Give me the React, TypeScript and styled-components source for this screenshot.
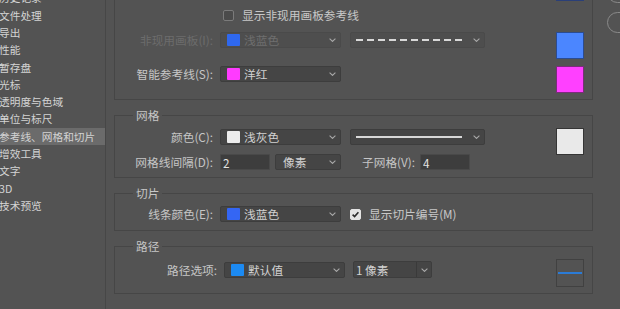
import React from "react";
import styled, { createGlobalStyle } from "styled-components";

const GlobalStyle = createGlobalStyle`
  html, body {
    margin: 0;
    padding: 0;
    background: #535353;
  }
  body {
    font-family: "Noto Sans CJK SC", "Noto Sans", sans-serif;
  }
`;

const NAV_ITEMS = [
  "历史记录",
  "文件处理",
  "导出",
  "性能",
  "暂存盘",
  "光标",
  "透明度与色域",
  "单位与标尺",
  "参考线、网格和切片",
  "增效工具",
  "文字",
  "3D",
  "技术预览",
];
const ACTIVE_ITEM = "参考线、网格和切片";

const Chevron = () => (
  <ChevronIcon width="7" height="4" viewBox="0 0 7 4">
    <path d="M0.6 0.6 L3.5 3.4 L6.4 0.6" fill="none" stroke="#a9a9a9" strokeWidth="1.1" />
  </ChevronIcon>
);

const LinePreview = ({ dashed }: { dashed?: boolean }) => (
  <LineSample width="106" height="2" viewBox="0 0 106 2">
    <line
      x1="0"
      y1="1"
      x2="106"
      y2="1"
      stroke="#d8d8d8"
      strokeWidth="2"
      strokeDasharray={dashed ? "7 4" : undefined}
    />
  </LineSample>
);

const Check = ({ checked }: { checked?: boolean }) => (
  <CheckBox $checked={checked}>
    {checked && (
      <svg width="9" height="9" viewBox="0 0 9 9">
        <path d="M1.6 4.6 L3.6 6.6 L7.4 2.2" fill="none" stroke="#2c2c2c" strokeWidth="1.6" />
      </svg>
    )}
  </CheckBox>
);

const ColorSelect = ({
  color,
  name,
  width = 121,
  disabled,
}: {
  color: string;
  name: string;
  width?: number;
  disabled?: boolean;
}) => (
  <Select $width={width} $disabled={disabled}>
    <Chip $color={color} />
    <span>{name}</span>
    <Chevron />
  </Select>
);

const App = () => {
  return (
    <>
      <GlobalStyle />
      <Window>
        <Sidebar>
          <NavList>
            {NAV_ITEMS.map((item) => (
              <NavItem key={item} $active={item === ACTIVE_ITEM}>
                {item}
              </NavItem>
            ))}
          </NavList>
        </Sidebar>

        <Main>
          <Scroll>
            {/* guides section, scrolled so its header sits above the view */}
            <Section $pb={6}>
              <Body>
                <Rows>
                  <CheckRow $top={33}>
                    <CheckLabel>
                      <Check />
                      <span>显示非现用画板参考线</span>
                    </CheckLabel>
                  </CheckRow>
                  <Row $top={9}>
                    <Label $dim>非现用画板(I):</Label>
                    <Controls>
                      <ColorSelect color="#2f68ee" name="浅蓝色" disabled />
                      <Select $width={135} $disabled>
                        <LinePreview dashed />
                        <Chevron />
                      </Select>
                    </Controls>
                  </Row>
                  <Row $top={18}>
                    <Label>智能参考线(S):</Label>
                    <Controls>
                      <ColorSelect color="#ff3bff" name="洋红" />
                    </Controls>
                  </Row>
                </Rows>
                <Aside>
                  <Swatch $color="#3a62c4" $edge="#2a3f78" />
                  <Swatch $color="#4b86ff" $edge="#2b4c92" $top={31} />
                  <Swatch $color="#ff40ff" $edge="#7c2c7c" $top={7} />
                </Aside>
              </Body>
            </Section>

            <Section $pb={7}>
              <Legend>网格</Legend>
              <Body>
                <Rows>
                  <Row $top={7}>
                    <Label>颜色(C):</Label>
                    <Controls>
                      <ColorSelect color="#ececec" name="浅灰色" />
                      <Select $width={135}>
                        <LinePreview />
                        <Chevron />
                      </Select>
                    </Controls>
                  </Row>
                  <Row $top={9}>
                    <Label>网格线间隔(D):</Label>
                    <Controls $gap={5}>
                      <Input $width={50} defaultValue="2" readOnly />
                      <Select $width={66} $pad={7}>
                        <span>像素</span>
                        <Chevron />
                      </Select>
                      <SubLabel>子网格(V):</SubLabel>
                      <Input $width={50} defaultValue="4" readOnly />
                    </Controls>
                  </Row>
                </Rows>
                <Aside>
                  <Swatch $color="#e9e9e9" $edge="#353535" $top={6} />
                </Aside>
              </Body>
            </Section>

            <Section $pb={8}>
              <Legend>切片</Legend>
              <Body>
                <Rows>
                  <Row $top={6}>
                    <Label>线条颜色(E):</Label>
                    <Controls>
                      <ColorSelect color="#3466f4" name="浅蓝色" />
                      <CheckLabel>
                        <Check checked />
                        <span>显示切片编号(M)</span>
                      </CheckLabel>
                    </Controls>
                  </Row>
                </Rows>
              </Body>
            </Section>

            <Section $pb={6}>
              <Legend>路径</Legend>
              <Body>
                <Rows>
                  <Row $top={8} $h={17}>
                    <Label $width={102}>路径选项:</Label>
                    <Controls $gap={8}>
                      <ColorSelect color="#1c8af2" name="默认值" />
                      <Combo>
                        <ComboText>1 像素</ComboText>
                        <ComboButton>
                          <Chevron />
                        </ComboButton>
                      </Combo>
                    </Controls>
                  </Row>
                </Rows>
                <Aside>
                  <PathPreview $top={6}>
                    <PathLine />
                  </PathPreview>
                </Aside>
              </Body>
            </Section>
          </Scroll>
        </Main>

        <Actions>
          <Pill />
          <Pill />
        </Actions>
      </Window>
    </>
  );
};

const Window = styled.div`
  display: flex;
  width: 620px;
  height: 309px;
  overflow: hidden;
  background: #535353;
  color: #c7c7c7;
`;

const Sidebar = styled.nav`
  flex: 0 0 105px;
  overflow: hidden;
  border-right: 1px solid #474747;
`;

const NavList = styled.ul`
  margin: -10.65px 0 0;
  padding: 0;
  list-style: none;
`;

const NavItem = styled.li<{ $active?: boolean }>`
  height: 17.3px;
  line-height: 17.3px;
  font-size: 10.7px;
  text-indent: -1px;
  white-space: nowrap;
  color: #d3d3d3;
  background: ${(props) => (props.$active ? "#6b6b6b" : "transparent")};
`;

const Main = styled.main`
  flex: 0 0 479px;
  padding-left: 8px;
  overflow: hidden;
`;

const Scroll = styled.div`
  display: flex;
  flex-direction: column;
  gap: 8px;
  margin-top: -27px;
`;

const Section = styled.fieldset<{ $pb: number }>`
  margin: 0;
  min-width: 0;
  padding: 0 8px ${(props) => props.$pb}px 0;
  border: 1px solid #464646;
`;

const Legend = styled.legend`
  margin-left: 18px;
  padding: 0 3px;
  font-size: 11.7px;
  line-height: 14px;
  color: #c6c6c6;
`;

const Body = styled.div`
  display: flex;
  align-items: flex-start;
  justify-content: space-between;
`;

const Rows = styled.div`
  display: flex;
  flex-direction: column;
`;

const Aside = styled.div`
  display: flex;
  flex-direction: column;
  width: 28px;
`;

const Row = styled.div<{ $top?: number; $h?: number }>`
  display: flex;
  align-items: center;
  height: ${(props) => props.$h ?? 16}px;
  margin-top: ${(props) => props.$top ?? 0}px;
`;

const CheckRow = styled(Row)`
  padding-left: 108px;
`;

const Label = styled.label<{ $width?: number; $dim?: boolean }>`
  flex: 0 0 ${(props) => props.$width ?? 98}px;
  margin-right: 7px;
  text-align: right;
  font-size: 11.7px;
  line-height: 16px;
  white-space: nowrap;
  color: ${(props) => (props.$dim ? "#6c6c6c" : "#c6c6c6")};
`;

const SubLabel = styled.label`
  margin-left: 16px;
  font-size: 11.7px;
  line-height: 16px;
  white-space: nowrap;
  color: #c6c6c6;
`;

const Controls = styled.div<{ $gap?: number }>`
  display: flex;
  align-items: center;
  gap: ${(props) => props.$gap ?? 9}px;
`;

const Select = styled.div<{ $width: number; $disabled?: boolean; $pad?: number }>`
  box-sizing: border-box;
  display: flex;
  align-items: center;
  gap: 4px;
  width: ${(props) => props.$width}px;
  height: 16px;
  padding: 0 4px 0 ${(props) => props.$pad ?? 6}px;
  border: 1px solid ${(props) => (props.$disabled ? "#4a4a4a" : "#3d3d3d")};
  border-radius: 2px;
  background: ${(props) => (props.$disabled ? "#4e4e4e" : "#454545")};
  color: ${(props) => (props.$disabled ? "#6e6e6e" : "#d2d2d2")};
  font-size: 11.7px;
  line-height: 14px;
  white-space: nowrap;

  svg:first-child {
    margin-left: -1px;
  }
`;

const Chip = styled.span<{ $color: string }>`
  flex: 0 0 13px;
  height: 12px;
  border-radius: 1px;
  background: ${(props) => props.$color};
`;

const ChevronIcon = styled.svg`
  flex-shrink: 0;
  margin-left: auto;
`;

const LineSample = styled.svg`
  flex-shrink: 0;
`;

const Input = styled.input<{ $width: number }>`
  box-sizing: border-box;
  width: ${(props) => props.$width}px;
  height: 16px;
  margin: 0;
  padding: 0 2px;
  border: 1px solid #494949;
  border-radius: 1px;
  background: #3d3d3d;
  color: #e2e2e2;
  font-family: inherit;
  font-size: 11.7px;
  line-height: 14px;
  outline: none;
`;

const Combo = styled.div`
  box-sizing: border-box;
  display: flex;
  width: 79px;
  height: 17px;
  border: 1px solid #3d3d3d;
  border-radius: 2px;
  background: #454545;
`;

const ComboText = styled.span`
  flex: 1;
  padding-left: 2px;
  font-size: 11.7px;
  line-height: 15px;
  color: #d2d2d2;
  white-space: nowrap;
`;

const ComboButton = styled.span`
  display: flex;
  align-items: center;
  justify-content: center;
  width: 14px;
  border-left: 1px solid #3a3a3a;

  svg {
    margin-left: 0;
  }
`;

const CheckLabel = styled.label`
  display: flex;
  align-items: center;
  gap: 8px;
  font-size: 11.7px;
  line-height: 16px;
  white-space: nowrap;
  color: #c8c8c8;
`;

const CheckBox = styled.span<{ $checked?: boolean }>`
  box-sizing: border-box;
  display: flex;
  align-items: center;
  justify-content: center;
  width: 11px;
  height: 11px;
  border: 1px solid ${(props) => (props.$checked ? "#e4e4e4" : "#7b7b7b")};
  border-radius: 2px;
  background: ${(props) => (props.$checked ? "#e4e4e4" : "#4b4b4b")};
`;

const Swatch = styled.div<{ $color: string; $edge: string; $top?: number }>`
  box-sizing: border-box;
  width: 28px;
  height: 27px;
  margin-top: ${(props) => props.$top ?? 0}px;
  border: 1px solid ${(props) => props.$edge};
  background: ${(props) => props.$color};
`;

const PathPreview = styled.div<{ $top?: number }>`
  box-sizing: border-box;
  display: flex;
  align-items: center;
  width: 28px;
  height: 28px;
  margin-top: ${(props) => props.$top ?? 0}px;
  padding: 0 1px;
  border: 1px solid #414141;
`;

const PathLine = styled.div`
  flex: 1;
  height: 2px;
  background: #2b7bd6;
`;

const Actions = styled.div`
  display: flex;
  flex-direction: column;
  gap: 9px;
  margin-top: -18px;
  padding-left: 14px;
`;

const Pill = styled.button`
  flex: 0 0 auto;
  width: 70px;
  height: 21px;
  padding: 0;
  border: 1px solid #8a8a8a;
  border-radius: 11px;
  background: transparent;
`;

export default App;
